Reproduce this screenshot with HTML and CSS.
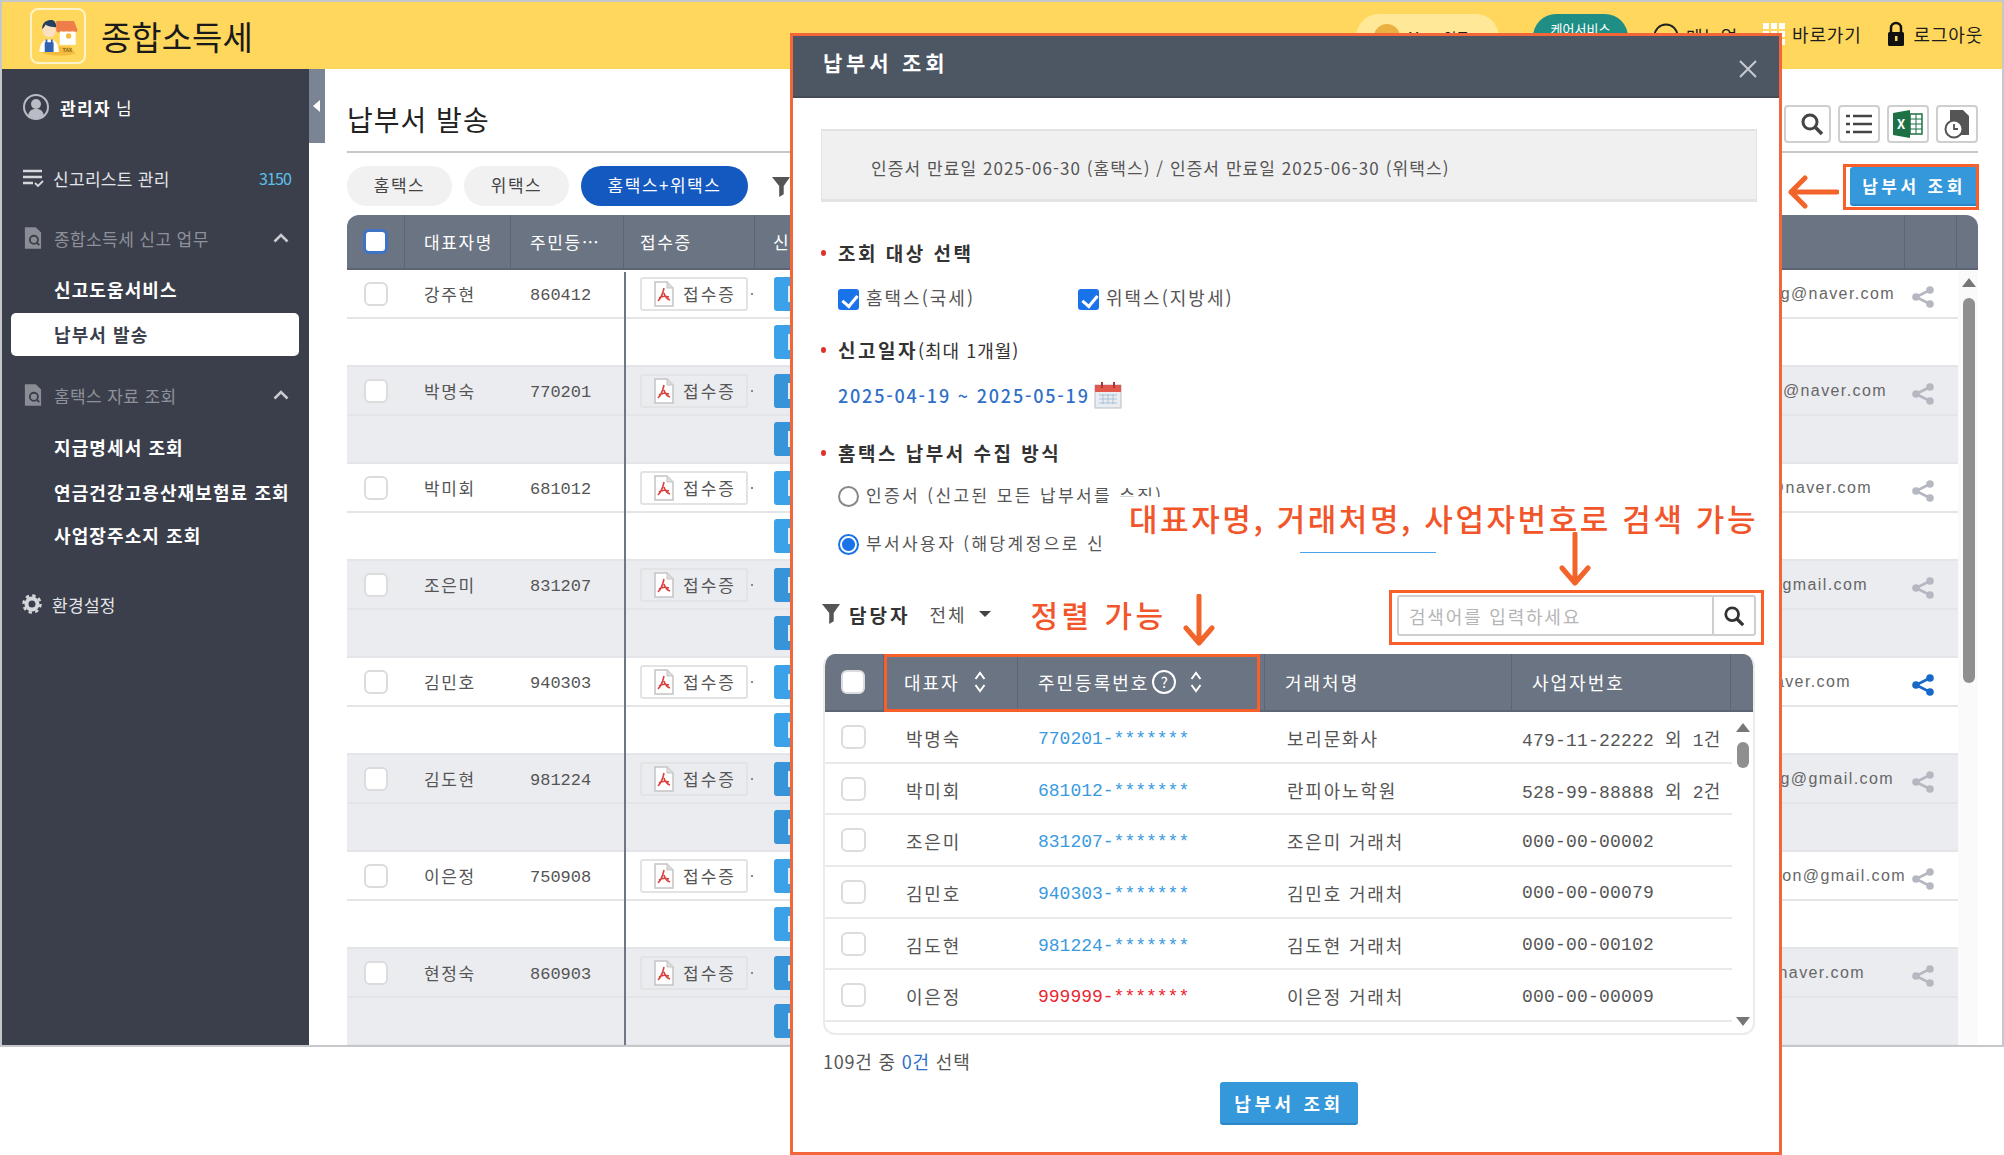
FILE: index.html
```html
<!DOCTYPE html>
<html lang="ko">

<head>
    <meta charset="UTF-8">
    <meta name="viewport" content="width=device-width, initial-scale=1.0">
    <title>종합소득세</title>
    <link rel="stylesheet" href="styles.css">
</head>

<body>
    <svg class="sprite" width="0" height="0">
        <symbol id="i-share" viewBox="0 0 24 24">
            <path d="M19 5 5 12l14 7" fill="none" stroke="currentColor" stroke-width="2.6"/>
            <circle cx="19" cy="5" r="3.8" fill="currentColor"/>
            <circle cx="5" cy="12" r="3.8" fill="currentColor"/>
            <circle cx="19" cy="19" r="3.8" fill="currentColor"/>
        </symbol>
        <symbol id="i-pdf" viewBox="0 0 20 26">
            <path d="M1 1h12l6 6v18H1z" fill="#fff" stroke="#c4c4c4" stroke-width="1.5"/>
            <path d="M13 1v6h6" fill="#ddd" stroke="#c4c4c4"/>
            <path d="M10 7c-1 5-3 10-6 13M10 12c1 4 3 6 6 7M5 17c3-2 7-2 10-1" fill="none" stroke="#d9423f" stroke-width="1.6"/>
        </symbol>
        <symbol id="i-search" viewBox="0 0 24 24">
            <circle cx="10" cy="10" r="7" fill="none" stroke="currentColor" stroke-width="3"/>
            <path d="m15 15 7 7" stroke="currentColor" stroke-width="3.6"/>
        </symbol>
        <symbol id="i-funnel" viewBox="0 0 20 24">
            <path d="M0 1h20l-7 10v9l-5 3V11z" fill="currentColor"/>
        </symbol>
        <symbol id="i-doc" viewBox="0 0 20 26">
            <path d="M1 1h12l6 6v18H1z" fill="#8a8d96"/>
            <circle cx="11" cy="15" r="4.5" fill="none" stroke="#3b3f4b" stroke-width="2"/>
            <path d="m14 18 3 3" stroke="#3b3f4b" stroke-width="2"/>
        </symbol>
        <symbol id="i-sort" viewBox="0 0 12 22">
            <path d="m1.5 8 4.5-6 4.5 6M1.5 14 6 20l4.5-6" fill="none" stroke="currentColor" stroke-width="2"/>
        </symbol>
        <symbol id="i-chev" viewBox="0 0 16 10">
            <path d="m1.5 8.500 6.500-6.500 6.500 6.500" fill="none" stroke="currentColor" stroke-width="2.600"/>
        </symbol>
    </svg>

    <div class="app">
        <header class="topbar">
            <div class="logo">
                <svg viewBox="0 0 52 52" width="46" height="46">
                    <path d="M6 44c8 4 26 6 40 2l-6-8H12z" fill="#f3bc3e"/>
                    <path d="M24 9h20l4 10a3 3 0 0 1-6 0 3 3 0 0 1-6 0 3 3 0 0 1-6 0 3 3 0 0 1-6 0z" fill="#ef7d4a"/>
                    <rect x="28" y="21" width="18" height="15" fill="#fff"/>
                    <circle cx="38" cy="26" r="3" fill="#f3bc3e"/>
                    <path d="M5 44c0-10 5-14 11-14s11 4 11 14z" fill="#fff"/>
                    <path d="M11 33h10v11H11zM12 30h2v4h-2zM18 30h2v4h-2z" fill="#2f62b0"/>
                    <circle cx="16" cy="20" r="7.500" fill="#fbe0c4"/>
                    <path d="M8 18c0-8 6-10 10-10 4 0 6 3 6 8-5 0-10-1-12-3-1 2-2 4-4 5z" fill="#26415f"/>
                    <text x="31" y="44" class="logo-tax">TAX</text>
                </svg>
            </div>
            <h1 class="app-title">종합소득세</h1>
            <nav class="top-nav">
                <span class="point-pill"><i class="coin"></i>My 포인트</span>
                <span class="teal-pill">케어서비스</span>
                <span class="top-link top-manual">
                    <svg width="26" height="26" viewBox="0 0 26 26"><circle cx="13" cy="13" r="11.500" fill="none" stroke="#222" stroke-width="2"/></svg>
                    메뉴얼
                </span>
                <span class="top-link">
                    <span class="dots"><i></i><i></i><i></i><i></i><i></i><i></i><i></i><i></i><i></i></span>
                    바로가기
                </span>
                <span class="top-link top-logout">
                    <svg width="18" height="26" viewBox="0 0 18 26"><path d="M4 12V7a5 5 0 0 1 10 0v5" fill="none" stroke="#111" stroke-width="2.500"/><rect x="1" y="11" width="16" height="14" rx="1.500" fill="#111"/><rect x="8" y="15" width="2.500" height="5" fill="#ffd75c"/></svg>
                    로그아웃
                </span>
            </nav>
        </header>

        <div class="layout">
            <aside class="sidebar">
                <div class="side-user">
                    <svg width="26" height="26" viewBox="0 0 26 26">
                        <circle cx="13" cy="13" r="12" fill="#3b3f4b" stroke="#b9bcc4" stroke-width="2"/>
                        <circle cx="13" cy="10" r="5" fill="#b9bcc4"/>
                        <path d="M5 22c1-6 4-7 8-7s7 1 8 7c-4 3-12 3-16 0z" fill="#b9bcc4"/>
                    </svg>
                    <span><b>관리자</b> 님</span>
                </div>
                <div class="side-list">
                    <svg width="22" height="20" viewBox="0 0 22 20"><path d="M1 3h19M1 9h19M1 15h10" stroke="#d5d7dc" stroke-width="2.400"/><path d="m13 15 3 3 5-5" fill="none" stroke="#d5d7dc" stroke-width="1.800"/></svg>
                    <span class="side-list-text">신고리스트 관리</span>
                    <span class="count">3150</span>
                </div>
                <div class="side-group side-group-first">
                    <svg width="18" height="24"><use href="#i-doc"/></svg>
                    <span class="side-group-text">종합소득세 신고 업무</span>
                    <svg class="chev" width="16" height="10"><use href="#i-chev"/></svg>
                </div>
                <a class="side-sub side-sub-first">신고도움서비스</a>
                <a class="side-sub side-active">납부서 발송</a>
                <div class="side-group side-group-second">
                    <svg width="18" height="24"><use href="#i-doc"/></svg>
                    <span class="side-group-text">홈택스 자료 조회</span>
                    <svg class="chev" width="16" height="10"><use href="#i-chev"/></svg>
                </div>
                <a class="side-sub side-sub-first">지급명세서 조회</a>
                <a class="side-sub side-sub-next">연금건강고용산재보험료 조회</a>
                <a class="side-sub side-sub-next">사업장주소지 조회</a>
                <div class="side-list side-setting">
                    <svg width="20" height="20" viewBox="0 0 20 20"><circle cx="10" cy="10" r="5.500" fill="none" stroke="#d5d7dc" stroke-width="4"/><circle cx="10" cy="10" r="8.500" fill="none" stroke="#d5d7dc" stroke-width="2.500" stroke-dasharray="3.400 3.270"/></svg>
                    <span class="side-list-text">환경설정</span>
                </div>
            </aside>

            <main class="main">
                <button class="side-toggle"></button>

                <div class="page-head">
                    <h2 class="page-title">납부서 발송</h2>
                    <div class="tools">
                        <span class="tool tool-search"><svg width="24" height="24"><use href="#i-search"/></svg></span>
                        <span class="tool">
                            <svg width="28" height="22" viewBox="0 0 28 22"><path d="M8 3h19M8 11h19M8 19h19" stroke="#444" stroke-width="2.400"/><path d="M1 3h4M1 11h4M1 19h4" stroke="#444" stroke-width="2.400"/></svg>
                        </span>
                        <span class="tool">
                            <svg width="30" height="28" viewBox="0 0 30 28"><path d="M0 3 17 0v28L0 25z" fill="#1e7145"/><path d="M17 4h12v20H17z" fill="#fff" stroke="#1e7145" stroke-width="1.500"/><path d="M17 9h12M17 14h12M17 19h12M23 4v20" stroke="#1e7145"/><text x="4" y="19" class="excel-x">X</text></svg>
                        </span>
                        <span class="tool">
                            <svg width="26" height="30" viewBox="0 0 26 30"><path d="M6 1h13l6 6v19H6z" fill="#555"/><circle cx="10" cy="20" r="8.500" fill="#fff" stroke="#555" stroke-width="2"/><path d="M10 15v5h4" fill="none" stroke="#555" stroke-width="1.800"/></svg>
                        </span>
                    </div>
                </div>

                <div class="filter-bar">
                    <span class="pill">홈택스</span>
                    <span class="pill">위택스</span>
                    <span class="pill pill-on">홈택스+위택스</span>
                    <svg class="bar-funnel" width="18" height="22"><use href="#i-funnel"/></svg>
                    <button class="btn-blue btn-query">납부서 조회</button>
                </div>

                <div class="grid-table">
                    <div class="grid-head">
                        <span class="gh gh-check"><i class="check check-head"></i></span>
                        <span class="gh gh-name">대표자명</span>
                        <span class="gh gh-num">주민등⋯</span>
                        <span class="gh gh-rcpt">접수증</span>
                        <span class="gh gh-fill">신고서</span>
                        <span class="gh gh-share"></span>
                        <span class="gh gh-end"></span>
                    </div>
                    <div class="grid-body">
                        <div class="grid-rows">
                            <div class="pair">
                                <div class="line"><i class="check"></i><span class="name">강주현</span><span class="num">860412</span><span class="rcpt"><svg width="20" height="26"><use href="#i-pdf"/></svg>접수증</span><span class="send"></span><span class="mail">kangjuhyeong@naver.com</span><svg class="share" width="24" height="24"><use href="#i-share"/></svg></div>
                                <div class="line line-sub"><span class="send"></span></div>
                            </div>
                            <div class="pair pair-gray">
                                <div class="line"><i class="check"></i><span class="name">박명숙</span><span class="num">770201</span><span class="rcpt"><svg width="20" height="26"><use href="#i-pdf"/></svg>접수증</span><span class="send"></span><span class="mail">parkmyeongr@naver.com</span><svg class="share" width="24" height="24"><use href="#i-share"/></svg></div>
                                <div class="line line-sub"><span class="send"></span></div>
                            </div>
                            <div class="pair">
                                <div class="line"><i class="check"></i><span class="name">박미회</span><span class="num">681012</span><span class="rcpt"><svg width="20" height="26"><use href="#i-pdf"/></svg>접수증</span><span class="send"></span><span class="mail">parkmiho12@naver.com</span><svg class="share" width="24" height="24"><use href="#i-share"/></svg></div>
                                <div class="line line-sub"><span class="send"></span></div>
                            </div>
                            <div class="pair pair-gray">
                                <div class="line"><i class="check"></i><span class="name">조은미</span><span class="num">831207</span><span class="rcpt"><svg width="20" height="26"><use href="#i-pdf"/></svg>접수증</span><span class="send"></span><span class="mail">choeunmi1@gmail.com</span><svg class="share" width="24" height="24"><use href="#i-share"/></svg></div>
                                <div class="line line-sub"><span class="send"></span></div>
                            </div>
                            <div class="pair">
                                <div class="line"><i class="check"></i><span class="name">김민호</span><span class="num">940303</span><span class="rcpt"><svg width="20" height="26"><use href="#i-pdf"/></svg>접수증</span><span class="send"></span><span class="mail">kimminho9@naver.com</span><svg class="share share-on" width="24" height="24"><use href="#i-share"/></svg></div>
                                <div class="line line-sub"><span class="send"></span></div>
                            </div>
                            <div class="pair pair-gray">
                                <div class="line"><i class="check"></i><span class="name">김도현</span><span class="num">981224</span><span class="rcpt"><svg width="20" height="26"><use href="#i-pdf"/></svg>접수증</span><span class="send"></span><span class="mail">kimdohyeong@gmail.com</span><svg class="share" width="24" height="24"><use href="#i-share"/></svg></div>
                                <div class="line line-sub"><span class="send"></span></div>
                            </div>
                            <div class="pair">
                                <div class="line"><i class="check"></i><span class="name">이은정</span><span class="num">750908</span><span class="rcpt"><svg width="20" height="26"><use href="#i-pdf"/></svg>접수증</span><span class="send"></span><span class="mail">leeeunjeongon@gmail.com</span><svg class="share" width="24" height="24"><use href="#i-share"/></svg></div>
                                <div class="line line-sub"><span class="send"></span></div>
                            </div>
                            <div class="pair pair-gray">
                                <div class="line"><i class="check"></i><span class="name">현정숙</span><span class="num">860903</span><span class="rcpt"><svg width="20" height="26"><use href="#i-pdf"/></svg>접수증</span><span class="send"></span><span class="mail">hyeonjung86@naver.com</span><svg class="share" width="24" height="24"><use href="#i-share"/></svg></div>
                                <div class="line line-sub"><span class="send"></span></div>
                            </div>
                        </div>
                        <div class="scroll-main">
                            <i class="arrow-up"></i>
                            <i class="scroll-thumb"></i>
                        </div>
                    </div>
                </div>
            </main>
        </div>
    </div>

    <!-- 메인 화면 위 주석 -->
    <span class="mark mark-query"></span>
    <svg class="arrow-left" width="52" height="34" viewBox="0 0 52 34">
        <path d="M50 17H4M18 3 4 17l14 14" fill="none" stroke="#f2642a" stroke-width="5" stroke-linecap="round" stroke-linejoin="round"/>
    </svg>

    <section class="modal">
        <div class="modal-head">
            <h3 class="modal-title">납부서 조회</h3>
            <svg class="modal-close" width="20" height="20" viewBox="0 0 20 20"><path d="m2 2 16 16M18 2 2 18" stroke="#c7cbd1" stroke-width="2"/></svg>
        </div>
        <div class="modal-body">
            <div class="info-box">인증서 만료일 2025-06-30 (홈택스) / 인증서 만료일 2025-06-30 (위택스)</div>

            <h4 class="sec-title sec-first">조회 대상 선택</h4>
            <div class="opts">
                <label class="opt"><i class="tick"></i>홈택스(국세)</label>
                <label class="opt"><i class="tick"></i>위택스(지방세)</label>
            </div>

            <h4 class="sec-title sec-date">신고일자<span class="sec-note">(최대 1개월)</span></h4>
            <div class="date-row">
                2025-04-19 ~ 2025-05-19
                <svg width="28" height="28" viewBox="0 0 28 28">
                    <rect x="1" y="4" width="26" height="23" fill="#e9edf2" stroke="#b7bec7"/>
                    <rect x="1" y="4" width="26" height="7" fill="#e2564c"/>
                    <path d="M8 1v6M20 1v6" stroke="#a33" stroke-width="2"/>
                    <path d="M5 14h18M5 18h18M5 22h18M9 13v10M14 13v10M19 13v10" stroke="#a9c1d9"/>
                </svg>
            </div>

            <h4 class="sec-title sec-method">홈택스 납부서 수집 방식</h4>
            <label class="radio-row radio-first"><i class="radio"></i>인증서 (신고된 모든 납부서를 수집)</label>
            <label class="radio-row radio-second"><i class="radio radio-on"></i>부서사용자 (해당계정으로 신</label>

            <div class="filter-row">
                <svg class="row-funnel" width="18" height="22"><use href="#i-funnel"/></svg>
                <b class="owner">담당자</b>
                <span class="owner-val">전체</span>
                <i class="caret"></i>
                <span class="hand hand-sort">정렬 가능</span>
                <svg class="arrow-down" width="34" height="52" viewBox="0 0 34 52"><path d="M17 2v46M4 34l13 15 13-15" fill="none" stroke="#f2642a" stroke-width="5" stroke-linecap="round" stroke-linejoin="round"/></svg>
                <div class="search-mark">
                    <div class="search-box">
                        <span class="search-ph">검색어를 입력하세요</span>
                        <span class="search-btn"><svg width="22" height="22"><use href="#i-search"/></svg></span>
                    </div>
                </div>
            </div>

            <div class="pick-table">
                <div class="pick-head">
                    <span class="ph ph-check"><i class="check"></i></span>
                    <span class="ph">대표자<svg class="sort" width="12" height="22"><use href="#i-sort"/></svg></span>
                    <span class="ph">주민등록번호<i class="help">?</i><svg class="sort" width="12" height="22"><use href="#i-sort"/></svg></span>
                    <span class="ph">거래처명</span>
                    <span class="ph">사업자번호</span>
                    <span class="ph ph-end"></span>
                    <span class="mark mark-head"></span>
                </div>
                <div class="pick-body">
                    <div class="pick-rows">
                        <div class="pick-row"><i class="check"></i><span>박명숙</span><span class="jumin">770201-*******</span><span>보리문화사</span><span class="biz">479-11-22222 외 1건</span></div>
                        <div class="pick-row"><i class="check"></i><span>박미회</span><span class="jumin">681012-*******</span><span>란피아노학원</span><span class="biz">528-99-88888 외 2건</span></div>
                        <div class="pick-row"><i class="check"></i><span>조은미</span><span class="jumin">831207-*******</span><span>조은미 거래처</span><span class="biz">000-00-00002</span></div>
                        <div class="pick-row"><i class="check"></i><span>김민호</span><span class="jumin">940303-*******</span><span>김민호 거래처</span><span class="biz">000-00-00079</span></div>
                        <div class="pick-row"><i class="check"></i><span>김도현</span><span class="jumin">981224-*******</span><span>김도현 거래처</span><span class="biz">000-00-00102</span></div>
                        <div class="pick-row"><i class="check"></i><span>이은정</span><span class="jumin jumin-bad">999999-*******</span><span>이은정 거래처</span><span class="biz">000-00-00009</span></div>
                    </div>
                    <div class="scroll-pick">
                        <i class="arrow-up"></i>
                        <i class="scroll-thumb"></i>
                        <i class="arrow-down-s"></i>
                    </div>
                </div>
            </div>

            <p class="pick-count">109건 중 <span class="pick-zero">0건</span> 선택</p>
            <div class="modal-foot"><button class="btn-blue btn-modal">납부서 조회</button></div>
        </div>

        <div class="note">
            <span class="hand hand-note">대표자명, 거래처명, 사업자번호로 검색 가능</span>
        </div>
        <svg class="arrow-note" width="34" height="54" viewBox="0 0 34 54"><path d="M17 2v48M4 36l13 15 13-15" fill="none" stroke="#f2642a" stroke-width="5" stroke-linecap="round" stroke-linejoin="round"/></svg>
    </section>
</body>

</html>
```
FILE: styles.css
```css
* {
    box-sizing: border-box;
}

html,
body {
    margin: 0;
    height: 1155px;
    overflow: hidden;
    background: #fff;
    font-family: "Noto Sans CJK KR", "Liberation Sans", sans-serif;
    font-size: 17px;
    color: #555;
}

h1, h2, h3, h4, p {
    margin: 0;
}

i {
    font-style: normal;
}

.sprite {
    position: absolute;
}

.app {
    height: 1047px;
    border: 2px solid #c6c7ca;
    display: flex;
    flex-direction: column;
    overflow: hidden;
}

/* top bar */
.topbar {
    height: 67px;
    flex: none;
    background: #ffd75c;
    display: flex;
    align-items: center;
    padding-left: 28px;
}

.logo {
    width: 56px;
    height: 56px;
    border: 2px solid #fff3c9;
    border-radius: 8px;
    display: flex;
    align-items: center;
    justify-content: center;
}

.logo-tax {
    font-size: 6px;
    font-weight: 700;
    fill: #8a6d1d;
}

.app-title {
    margin: 2px 0 0 15px;
    font-size: 33px;
    font-weight: 400;
    color: #1a1a1a;
    line-height: 1;
}

.top-nav {
    margin-left: auto;
    display: flex;
    align-items: center;
    padding: 0 19px 3px 0;
    color: #1d1d1d;
}

.point-pill {
    width: 143px;
    height: 46px;
    border-radius: 23px;
    background: #ffe897;
    display: flex;
    align-items: center;
    gap: 8px;
    padding-left: 18px;
    font-size: 14px;
    margin-top: 6px;
}

.coin {
    width: 26px;
    height: 26px;
    border-radius: 50%;
    background: #eab040;
}

.teal-pill {
    width: 95px;
    height: 46px;
    border-radius: 23px;
    background: #1f8f85;
    color: #fff;
    margin-left: 34px;
    margin-top: 6px;
    font-size: 13px;
    text-align: center;
    line-height: 30px;
}

.top-link {
    display: flex;
    align-items: center;
    gap: 7px;
    margin-left: 25px;
    font-size: 18px;
    letter-spacing: 0.8px;
}

.top-logout {
    gap: 9px;
}

.top-manual {
    margin-top: 4px;
}

.dots {
    width: 22px;
    display: grid;
    grid-template-columns: repeat(3, 6px);
    gap: 2px;
}

.dots i {
    height: 6px;
    background: #fff;
}

/* sidebar */
.layout {
    flex: 1;
    display: flex;
    min-height: 0;
}

.sidebar {
    width: 307px;
    flex: none;
    background: #3b3f4b;
    color: #e4e5e8;
}

.side-user {
    height: 28px;
    margin: 24px 0 0 21px;
    display: flex;
    align-items: center;
    gap: 11px;
    color: #fff;
}

.side-user b {
    letter-spacing: 1.4px;
}

.side-list {
    height: 24px;
    margin: 45px 0 0 20px;
    display: flex;
    align-items: center;
    gap: 9px;
    padding-right: 18px;
}

.side-list-text {
    letter-spacing: 0.3px;
}

.count {
    margin-left: auto;
    font-size: 16px;
    letter-spacing: -0.9px;
    color: #5cc0ea;
}

.side-group {
    height: 24px;
    margin-left: 22px;
    display: flex;
    align-items: center;
    gap: 12px;
    padding-right: 20px;
    color: #8e919a;
}

.side-group-first {
    margin-top: 36px;
}

.side-group-second {
    margin-top: 27px;
}

.side-group-text {
    letter-spacing: 0.4px;
}

.chev {
    margin-left: auto;
    color: #c9cbd0;
}

.side-sub {
    display: block;
    height: 24px;
    line-height: 24px;
    padding-left: 52px;
    font-size: 18px;
    font-weight: 700;
    letter-spacing: 1.1px;
    color: #fff;
}

.side-sub-first {
    margin-top: 27px;
}

.side-group-second + .side-sub-first {
    margin-top: 28px;
}

.side-sub-next {
    margin-top: 21px;
}

.side-sub-next + .side-sub-next {
    margin-top: 19px;
}

.side-active {
    height: 43px;
    line-height: 43px;
    margin: 12px 10px 0 9px;
    padding-left: 43px;
    background: #fff;
    border-radius: 5px;
    color: #3b3f4b;
}

.side-setting {
    margin-top: 45px;
    gap: 10px;
}

/* main */
.main {
    position: relative;
    flex: 1;
    min-width: 0;
    padding: 0 24px 0 38px;
    overflow: hidden;
}

.side-toggle {
    position: absolute;
    left: 0;
    top: 0;
    width: 16px;
    height: 74px;
    padding: 0;
    border: 0;
    background: #7b8494;
}

.side-toggle::after {
    content: "";
    position: absolute;
    left: 4px;
    top: 31px;
    border: 6px solid transparent;
    border-left-width: 0;
    border-right: 7px solid #fff;
}

.page-head {
    height: 84px;
    border-bottom: 2px solid #c6c7ca;
    display: flex;
    align-items: flex-end;
    justify-content: space-between;
    padding-bottom: 8px;
}

.page-title {
    font-size: 28px;
    font-weight: 400;
    letter-spacing: 1px;
    line-height: 42px;
    color: #222;
    margin-bottom: 3px;
}

.tools {
    display: flex;
    gap: 7px;
}

.tool {
    width: 42px;
    height: 38px;
    border: 2px solid #cfcfcf;
    border-radius: 4px;
    background: #fff;
    color: #444;
    display: flex;
    align-items: center;
    justify-content: center;
}

.tool-search {
    width: 47px;
    padding-left: 8px;
}

.excel-x {
    font-size: 13px;
    font-weight: 700;
    fill: #fff;
}

.filter-bar {
    height: 62px;
    display: flex;
    align-items: flex-start;
    padding-top: 13px;
}

.pill {
    width: 105px;
    height: 40px;
    margin-right: 12px;
    border-radius: 20px;
    background: #f1f1f2;
    color: #444;
    text-align: center;
    line-height: 38px;
    letter-spacing: 1.5px;
}

.pill-on {
    width: 167px;
    background: #1359c0;
    color: #fff;
}

.bar-funnel {
    margin: 10px 0 0 12px;
    color: #555;
}

.btn-blue {
    border: 0;
    border-bottom: 2px solid #2b85c6;
    border-radius: 3px;
    background: #3498db;
    color: #fff;
    font-family: inherit;
    font-weight: 700;
    padding: 0;
}

.btn-query {
    width: 128px;
    height: 39px;
    margin: 1px 0 0 auto;
    font-size: 17px;
    letter-spacing: 3.4px;
}

.grid-table {
    border-radius: 12px 12px 0 0;
    overflow: hidden;
}

.grid-head {
    height: 55px;
    background: #6b7483;
    display: grid;
    grid-template-columns: 58px 106px 113px 131px 1fr 52px 21px;
    border-bottom: 2px solid #5d6574;
}

.gh {
    color: #fff;
    display: flex;
    align-items: center;
    letter-spacing: 1.6px;
    border-right: 1px solid #5d6574;
}

.gh-check {
    justify-content: center;
}

.gh-name,
.gh-num {
    padding-left: 19px;
}

.gh-rcpt {
    padding-left: 16px;
}

.gh-fill {
    padding-left: 18px;
}

.gh-end {
    border-right: 0;
}

.check {
    display: block;
    width: 24px;
    height: 24px;
    border: 2px solid #dcdcdf;
    border-radius: 6px;
    background: #fff;
}

.check-head {
    border: 3px solid #3f74c5;
    width: 25px;
    height: 25px;
}

.grid-body {
    display: flex;
}

.grid-rows {
    position: relative;
    flex: 1;
    min-width: 0;
}

.grid-rows::before {
    content: "";
    position: absolute;
    left: 277px;
    top: 2px;
    bottom: 0;
    width: 2px;
    background: #6f7684;
    z-index: 1;
}

.pair-gray {
    background: #ebecf0;
}

.line {
    height: 49px;
    display: grid;
    grid-template-columns: 58px 106px 113px 150px 1fr 255px 50px;
    align-items: center;
    border-bottom: 2px solid #e4e5e9;
}

.line-sub {
    height: 48px;
}

.line > .check {
    justify-self: center;
}

.line-sub > .send {
    grid-column: 5;
}

.name {
    padding-left: 19px;
    letter-spacing: 1.6px;
}

.num {
    padding: 3px 0 0 19px;
    font-family: "Liberation Mono", monospace;
    font-size: 17px;
}

.rcpt {
    position: relative;
    width: 108px;
    height: 34px;
    margin-left: 16px;
    border: 2px solid #e3e3e5;
    border-radius: 3px;
    background: inherit;
    display: flex;
    align-items: center;
    gap: 9px;
    padding-left: 12px;
    letter-spacing: 2px;
}

.rcpt::after {
    content: "";
    position: absolute;
    right: -7px;
    top: 14px;
    width: 2px;
    height: 2px;
    background: #888;
}

.send {
    width: 60px;
    height: 34px;
    border-radius: 3px 0 0 3px;
    background: #3ba1e8;
    display: flex;
    align-items: center;
    padding-left: 14px;
}

.send::before {
    content: "";
    width: 5px;
    height: 16px;
    background: #dfeffa;
}

.pair-gray .send {
    background: #3794d8;
}

.mail {
    justify-self: end;
    font-family: "Liberation Sans", sans-serif;
    font-size: 16px;
    letter-spacing: 1.4px;
    color: #666;
    white-space: nowrap;
}

.pair:nth-child(1) .mail { margin-right: 13px; }
.pair:nth-child(2) .mail { margin-right: 21px; }
.pair:nth-child(3) .mail { margin-right: 36px; }
.pair:nth-child(4) .mail { margin-right: 40px; }
.pair:nth-child(5) .mail { margin-right: 57px; }
.pair:nth-child(6) .mail { margin-right: 14px; }
.pair:nth-child(7) .mail { margin-right: 2px; }
.pair:nth-child(8) .mail { margin-right: 43px; }

.share {
    color: #b5b8c0;
    margin: 6px 0 0 3px;
}

.share-on {
    color: #1668c9;
}

.scroll-main {
    width: 20px;
    background: #fafafa;
    display: flex;
    flex-direction: column;
    align-items: center;
    padding: 8px 0 0 2px;
}

.arrow-up {
    border: 7px solid transparent;
    border-top: 0;
    border-bottom: 9px solid #777;
}

.arrow-down-s {
    border: 7px solid transparent;
    border-bottom: 0;
    border-top: 9px solid #777;
    margin-top: auto;
}

.scroll-thumb {
    width: 12px;
    height: 385px;
    margin-top: 11px;
    border-radius: 6px;
    background: #8f8f8f;
}

/* annotation marks */
.mark {
    position: absolute;
    border: 3px solid #f95f2b;
}

.mark-query {
    left: 1843px;
    top: 164px;
    width: 136px;
    height: 46px;
}

.arrow-left {
    position: absolute;
    left: 1787px;
    top: 175px;
}

/* modal */
.modal {
    position: absolute;
    left: 790px;
    top: 33px;
    width: 992px;
    height: 1122px;
    border: 3px solid #f2663a;
    background: #fff;
}

.modal-head {
    height: 62px;
    background: #4d5663;
    display: flex;
    align-items: center;
    justify-content: space-between;
    padding: 0 21px 0 30px;
    border-bottom: 2px solid #444c58;
}

.modal-title {
    font-size: 21px;
    font-weight: 700;
    letter-spacing: 3.8px;
    color: #fff;
    margin-bottom: 8px;
}

.modal-close {
    margin-top: 5px;
}

.modal-body {
    padding: 31px 22px 0 28px;
}

.info-box {
    height: 73px;
    padding-left: 49px;
    border: 2px solid #e3e3e3;
    border-width: 2px 1px 3px;
    background: #f0f0f0;
    font-size: 17px;
    letter-spacing: 1.07px;
    line-height: 73px;
    color: #555;
}

.sec-title {
    position: relative;
    height: 24px;
    padding-left: 17px;
    font-size: 19px;
    font-weight: 700;
    letter-spacing: 2.5px;
    line-height: 24px;
    color: #333;
}

.sec-title::before {
    content: "";
    position: absolute;
    left: 0;
    top: 9px;
    width: 5px;
    height: 6px;
    border-radius: 50%;
    background: #e0322c;
}

.sec-first {
    margin-top: 39px;
}

.sec-date {
    margin-top: 30px;
}

.sec-method {
    margin-top: 32px;
}

.sec-note {
    font-weight: 400;
    font-size: 18px;
    letter-spacing: 1px;
}

.opts {
    height: 24px;
    margin-top: 19px;
    padding-left: 17px;
    display: grid;
    grid-template-columns: 240px 1fr;
}

.opt,
.radio-row {
    display: flex;
    align-items: center;
    gap: 7px;
    color: #555;
}

.opt {
    font-size: 18px;
    letter-spacing: 2px;
}

.tick {
    width: 21px;
    height: 21px;
    margin-top: 4px;
    border-radius: 3px;
    background: #1a73e8;
    position: relative;
    flex: none;
}

.tick::after {
    content: "";
    position: absolute;
    left: 7px;
    top: 3px;
    width: 7px;
    height: 12px;
    border: solid #fff;
    border-width: 0 3px 3px 0;
    transform: rotate(40deg);
}

.date-row {
    height: 28px;
    margin-top: 19px;
    padding-left: 17px;
    display: flex;
    align-items: center;
    gap: 4px;
    font-size: 18px;
    font-weight: 500;
    letter-spacing: 1.8px;
    color: #2f6fc8;
}

.radio-row {
    height: 24px;
    padding-left: 17px;
    white-space: nowrap;
    letter-spacing: 2.4px;
}

.radio-first {
    margin-top: 17px;
}

.radio-second {
    margin-top: 24px;
}

.radio {
    width: 21px;
    height: 21px;
    margin-top: 4px;
    border: 2px solid #888;
    border-radius: 50%;
    flex: none;
    background: #fff;
}

.radio-on {
    border-color: #1a73e8;
    background: radial-gradient(circle, #1a73e8 0 6px, #fff 7px);
}

.filter-row {
    position: relative;
    height: 55px;
    margin-top: 36px;
    display: flex;
    align-items: center;
    padding-bottom: 7px;
}

.row-funnel {
    color: #555;
    margin-left: 1px;
    margin-right: 9px;
}

.owner {
    font-size: 19px;
    letter-spacing: 3px;
    color: #333;
}

.owner-val {
    margin-left: 19px;
    font-size: 18px;
    letter-spacing: 2px;
}

.caret {
    margin-left: 12px;
    border: 6px solid transparent;
    border-top: 6px solid #444;
    border-bottom: 0;
}

.hand {
    color: #f2552a;
    font-weight: 500;
    white-space: nowrap;
}

.hand-sort {
    margin-left: 40px;
    font-size: 30px;
    letter-spacing: 3.4px;
    line-height: 1;
}

.arrow-down {
    position: absolute;
    left: 361px;
    top: 4px;
}

.search-mark {
    margin-left: auto;
    margin-right: -7px;
    margin-bottom: -7px;
    width: 375px;
    height: 55px;
    border: 3px solid #f95f2b;
    padding: 2px 5px;
}

.search-box {
    height: 41px;
    border: 2px solid #cfcfcf;
    border-radius: 3px;
    display: flex;
    align-items: center;
}

.search-ph {
    flex: 1;
    padding-left: 10px;
    font-size: 18px;
    color: #b5b5b5;
    letter-spacing: 1.8px;
}

.search-btn {
    width: 42px;
    height: 100%;
    border-left: 2px solid #cfcfcf;
    color: #333;
    display: flex;
    align-items: center;
    justify-content: center;
}

.pick-table {
    margin: 9px 2px 0;
    height: 381px;
    border: 2px solid #ebebeb;
    border-top: 0;
    border-radius: 12px;
    overflow: hidden;
}

.pick-head {
    position: relative;
    height: 58px;
    margin: 0 -2px;
    background: #6b7483;
    display: grid;
    grid-template-columns: 61px 134px 247px 247px 219px 1fr;
    border-bottom: 2px solid #5d6574;
}

.ph {
    display: flex;
    align-items: center;
    padding-left: 20px;
    color: #fff;
    font-size: 18px;
    letter-spacing: 2px;
    border-right: 1px solid #5d6574;
}

.ph-check {
    justify-content: center;
    padding-left: 0;
}

.ph-end {
    border-right: 0;
}

.sort {
    margin-left: 14px;
    color: #fff;
}

.help {
    width: 24px;
    height: 24px;
    margin-left: 3px;
    border: 2px solid #fff;
    border-radius: 50%;
    font-size: 15px;
    line-height: 19px;
    text-align: center;
    letter-spacing: 0;
}

.mark-head {
    left: 61px;
    top: 0;
    width: 376px;
    height: 58px;
}

.pick-body {
    display: flex;
    margin-left: -2px;
}

.pick-rows {
    width: 909px;
    flex: none;
}

.pick-row {
    height: 51.700px;
    display: grid;
    grid-template-columns: 61px 134px 247px 247px 219px;
    align-items: center;
    border-bottom: 2px solid #e9e9ec;
    white-space: nowrap;
    font-size: 18px;
    letter-spacing: 1.8px;
}

.pick-row > .check {
    justify-self: center;
    width: 25px;
    height: 24px;
}

.pick-row > span {
    padding: 2px 0 0 22px;
}

.pick-row > .jumin {
    padding: 4px 0 0 20px;
    font-family: "Liberation Mono", monospace;
    font-size: 18px;
    letter-spacing: 0;
    color: #3a9ae0;
}

.pick-row > .jumin-bad {
    color: #ea2530;
}

.pick-row > .biz {
    padding: 3px 0 0 10px;
    font-family: "Liberation Mono", "Noto Sans CJK KR", monospace;
    font-size: 18px;
    letter-spacing: 0.2px;
}

.scroll-pick {
    flex: 1;
    height: 320px;
    display: flex;
    flex-direction: column;
    align-items: center;
    padding: 11px 0 6px;
}

.scroll-pick .scroll-thumb {
    height: 26px;
    margin-top: 10px;
}

.pick-count {
    height: 22px;
    margin: 15px 0 0 2px;
    line-height: 22px;
    font-size: 18px;
    letter-spacing: 0.8px;
}

.pick-zero {
    color: #2f6fc8;
}

.modal-foot {
    margin-top: 10px;
    text-align: center;
}

.btn-modal {
    width: 138px;
    height: 43px;
    font-size: 18px;
    letter-spacing: 3.600px;
    border-radius: 3px;
}

.note {
    position: absolute;
    left: 319px;
    top: 461px;
    width: 660px;
    height: 57px;
    background: #fff;
    padding-left: 17px;
}

.note::after {
    content: "";
    position: absolute;
    left: 188px;
    bottom: 1px;
    width: 136px;
    height: 1px;
    background: #4aa3e8;
}

.hand-note {
    font-size: 31px;
    letter-spacing: 2.600px;
    line-height: 42px;
}

.arrow-note {
    position: absolute;
    left: 765px;
    top: 496px;
}
```
